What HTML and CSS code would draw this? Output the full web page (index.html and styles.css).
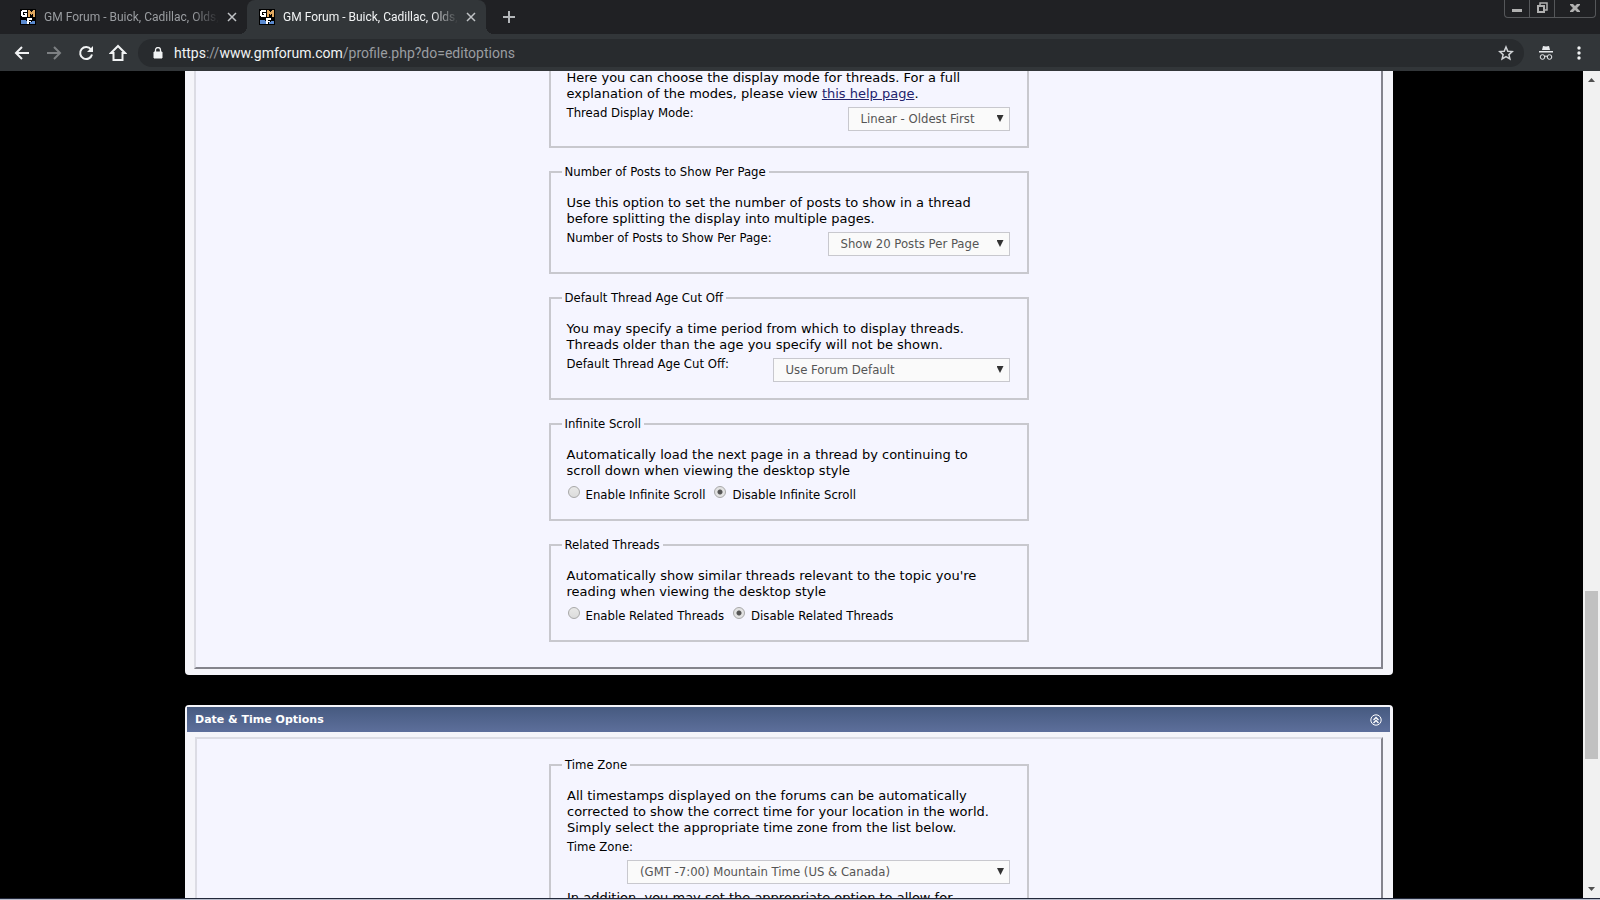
FILE: index.html
```html
<!DOCTYPE html>
<html lang="en">

<head>
  <meta charset="utf-8">
  <title>GM Forum - Buick, Cadillac, Olds</title>
  <link rel="stylesheet" href="styles.css">
</head>

<body>
  <svg width="0" height="0" class="defs" aria-hidden="true">
    <symbol id="favicon" viewBox="0 0 16 16">
      <rect width="16" height="16" fill="#000"/>
      <path d="M1 11h5v1h1v3H1zM10 13h2v-1h3v3h-5z" fill="#5a8ad0"/>
      <path d="M2 1h5v2H3v3h2V5H4V4h3v4H2V7H1V2h1z" fill="#fff"/>
      <path d="M8 1h2v1h1v1h1V2h1V1h2v7h-2V5h-1v1h-1V5h-1v3H8z" fill="#e0a860"/>
      <path d="M7 9h5v2H9v1h2v1H9v2H7z" fill="#fff"/>
    </symbol>
    <symbol id="close" viewBox="0 0 10 10">
      <path d="M1 1l8 8M9 1l-8 8" stroke="currentColor" stroke-width="1.5" fill="none"/>
    </symbol>
  </svg>

  <div class="browser">
    <header class="tabs">
      <div class="tab">
        <svg class="favicon"><use href="#favicon"/></svg>
        <span class="tab-title">GM Forum - Buick, Cadillac, Olds,</span>
        <button class="tab-close" aria-label="Close tab"><svg width="10" height="10"><use href="#close"/></svg></button>
      </div>
      <div class="tab active">
        <svg class="favicon"><use href="#favicon"/></svg>
        <span class="tab-title">GM Forum - Buick, Cadillac, Olds,</span>
        <button class="tab-close" aria-label="Close tab"><svg width="10" height="10"><use href="#close"/></svg></button>
      </div>
      <button class="new-tab" aria-label="New tab"><svg width="12" height="12" viewBox="0 0 12 12"><path d="M6 0v12M0 6h12" stroke="#b4b7ba" stroke-width="2"/></svg></button>
      <div class="window-buttons">
        <button aria-label="Minimize"><svg width="10" height="10" viewBox="0 0 10 10"><path d="M0 6h10v3H0z" fill="#b0b0b0"/></svg></button>
        <button aria-label="Restore"><svg width="12" height="12" viewBox="0 0 12 12"><path d="M4 3V1h7v7H9" stroke="#b0b0b0" stroke-width="1.5" fill="none"/><path d="M2 4h6v6H2z" stroke="#b0b0b0" stroke-width="2" fill="none"/></svg></button>
        <button class="window-close" aria-label="Close"><svg width="10" height="10" viewBox="0 0 10 10"><path d="M0 1h3l2 2 2-2h3v1L7 5l3 3v1H7L5 7 3 9H0V8l3-3-3-3z" fill="#b0b0b0"/></svg></button>
      </div>
    </header>

    <nav class="toolbar">
      <button aria-label="Back"><svg width="16" height="16" viewBox="0 0 16 16"><path d="M15 8H2M8 2L2 8l6 6" stroke="#f1f3f4" stroke-width="2" fill="none"/></svg></button>
      <button aria-label="Forward"><svg width="16" height="16" viewBox="0 0 16 16"><path d="M1 8h13M8 2l6 6-6 6" stroke="#7d8083" stroke-width="2" fill="none"/></svg></button>
      <button aria-label="Reload"><svg width="16" height="16" viewBox="0 0 16 16"><path d="M13 4.500A6 6 0 1 0 14 9.500" stroke="#f1f3f4" stroke-width="2" fill="none"/><path d="M15 1v6H9z" fill="#f1f3f4"/></svg></button>
      <button aria-label="Home"><svg width="18" height="18" viewBox="0 0 18 18"><path d="M9 2L2 9h2.500v7h9V9H16z" stroke="#f1f3f4" stroke-width="2" fill="none"/></svg></button>
      <div class="address">
        <svg width="10" height="12" viewBox="0 0 10 12"><path d="M1 5h8v6H1z" fill="#f1f3f4" stroke="#f1f3f4"/><path d="M2.500 5V3a2.500 2.500 0 0 1 5 0v2" stroke="#f1f3f4" stroke-width="1.300" fill="none"/></svg>
        <div class="url" role="textbox" contenteditable="true" spellcheck="false" aria-label="Address"><b>https</b>://<b>www.gmforum.com</b>/profile.php?do=editoptions</div>
        <button class="star" aria-label="Bookmark"><svg width="16" height="16" viewBox="0 0 16 16"><path d="M8 2l1.800 4.200 4.500.4-3.400 3 1 4.400L8 11.700 4.100 14l1-4.400-3.400-3 4.500-.4z" stroke="#d0d3d6" stroke-width="1.500" fill="none"/></svg></button>
      </div>
      <svg class="incognito" width="16" height="16" viewBox="0 0 16 16"><path d="M4 5l1-4 3 .6L11 1l1 4zM1 6h14v1.500H1z" fill="#e8eaed"/><circle cx="4.500" cy="12" r="2.300" stroke="#e8eaed" fill="none"/><circle cx="11.500" cy="12" r="2.300" stroke="#e8eaed" fill="none"/><path d="M6.500 11.500q1.500-1 3 0" stroke="#e8eaed" fill="none"/></svg>
      <button class="menu" aria-label="Menu"><svg width="4" height="14" viewBox="0 0 4 14"><circle cx="2" cy="2" r="1.700" fill="#f1f3f4"/><circle cx="2" cy="7" r="1.700" fill="#f1f3f4"/><circle cx="2" cy="12" r="1.700" fill="#f1f3f4"/></svg></button>
    </nav>

    <div class="viewport">
      <main class="page">
        <form>
          <section class="panel continued">
            <div class="panel-body">
              <div class="fieldset continued">
                <p>Here you can choose the display mode for threads. For a full<br>explanation of the modes, please view <a href="#">this help page</a>.</p>
                <div class="row">
                  <label for="mode">Thread Display Mode:</label>
                  <span class="select w-mode"><select id="mode"><option>Linear - Oldest First</option></select></span>
                </div>
              </div>

              <fieldset>
                <legend>Number of Posts to Show Per Page</legend>
                <p>Use this option to set the number of posts to show in a thread<br>before splitting the display into multiple pages.</p>
                <div class="row">
                  <label for="posts">Number of Posts to Show Per Page:</label>
                  <span class="select w-posts"><select id="posts"><option>Show 20 Posts Per Page</option></select></span>
                </div>
              </fieldset>

              <fieldset>
                <legend>Default Thread Age Cut Off</legend>
                <p>You may specify a time period from which to display threads.<br>Threads older than the age you specify will not be shown.</p>
                <div class="row">
                  <label for="age">Default Thread Age Cut Off:</label>
                  <span class="select w-age"><select id="age"><option>Use Forum Default</option></select></span>
                </div>
              </fieldset>

              <fieldset>
                <legend>Infinite Scroll</legend>
                <p>Automatically load the next page in a thread by continuing to<br>scroll down when viewing the desktop style</p>
                <div class="radios">
                  <label><input type="radio" name="scroll"> Enable Infinite Scroll</label>
                  <label><input type="radio" name="scroll" checked> Disable Infinite Scroll</label>
                </div>
              </fieldset>

              <fieldset>
                <legend>Related Threads</legend>
                <p>Automatically show similar threads relevant to the topic you're<br>reading when viewing the desktop style</p>
                <div class="radios">
                  <label><input type="radio" name="related"> Enable Related Threads</label>
                  <label><input type="radio" name="related" checked> Disable Related Threads</label>
                </div>
              </fieldset>
            </div>
          </section>

          <section class="panel">
            <h2>Date &amp; Time Options
              <button type="button" aria-label="Collapse"><svg width="12" height="12" viewBox="0 0 12 12"><circle cx="6" cy="6" r="5.200" stroke="#fff" fill="none"/><path d="M3.500 6L6 3.500 8.500 6M3.500 9L6 6.500 8.500 9" stroke="#fff" stroke-width="1.300" fill="none"/></svg></button>
            </h2>
            <div class="panel-body">
              <fieldset>
                <legend>Time Zone</legend>
                <p>All timestamps displayed on the forums can be automatically<br>corrected to show the correct time for your location in the world.<br>Simply select the appropriate time zone from the list below.</p>
                <div class="row stacked">
                  <label for="zone">Time Zone:</label>
                  <span class="select w-zone"><select id="zone"><option>(GMT -7:00) Mountain Time (US &amp; Canada)</option></select></span>
                </div>
                <p>In addition, you may set the appropriate option to allow for</p>
              </fieldset>
            </div>
          </section>
        </form>
      </main>
      <div class="scrollbar">
        <span class="arrow up"></span>
        <span class="thumb"></span>
        <span class="arrow down"></span>
      </div>
    </div>
    <footer class="taskbar"></footer>
  </div>
</body>

</html>
```
FILE: styles.css
```css
* {
  box-sizing: border-box;
}

body {
  margin: 0;
  background: #000;
  overflow: hidden;
  font-family: "DejaVu Sans Condensed", Tahoma, sans-serif;
  font-size: 13px;
}

button {
  display: flex;
  align-items: center;
  justify-content: center;
  padding: 0;
  border: 0;
  background: none;
}

.defs {
  position: absolute;
}

.browser {
  display: flex;
  flex-direction: column;
  height: 100vh;
}

/* tab strip */
.tabs {
  display: flex;
  height: 34px;
  padding-left: 8px;
  background: #202124;
}

.tab {
  position: relative;
  display: flex;
  align-items: center;
  width: 239px;
  padding: 0 10px 0 12px;
  color: #9a9da1;
  font-family: Roboto, sans-serif;
  font-size: 12px;
}

.tab.active {
  border-radius: 8px 8px 0 0;
  background: #323639;
  color: #f1f3f4;
}

/* curved feet of the open tab */
.tab.active::before,
.tab.active::after {
  content: "";
  position: absolute;
  bottom: 0;
  left: -8px;
  width: 8px;
  height: 8px;
  background: radial-gradient(circle at 0 0, transparent 8px, #323639 8px);
}

.tab.active::after {
  right: -8px;
  left: auto;
  background: radial-gradient(circle at 100% 0, transparent 8px, #323639 8px);
}

.favicon {
  flex-shrink: 0;
  width: 16px;
  height: 16px;
  margin-right: 8px;
}

.tab-title {
  flex: 1;
  min-width: 0;
  white-space: nowrap;
  -webkit-mask-image: linear-gradient(to right, #000 85%, transparent);
  mask-image: linear-gradient(to right, #000 85%, transparent);
}

.tab-close {
  margin-left: 8px;
  color: #c0c3c6;
}

.new-tab {
  width: 46px;
}

.window-buttons {
  display: flex;
  height: 18px;
  margin-left: auto;
  margin-right: 4px;
  border: 1px solid #55575a;
  border-top: 0;
  border-radius: 0 0 4px 4px;
}

.window-buttons button {
  width: 25px;
  padding-bottom: 2px;
  border-right: 1px solid #55575a;
}

.window-buttons .window-close {
  width: 40px;
  border-right: 0;
}

/* toolbar */
.toolbar {
  display: flex;
  align-items: center;
  height: 37px;
  padding: 0 13px 0 6px;
  background: #323639;
}

.toolbar > button {
  width: 32px;
  height: 32px;
}

.toolbar .menu {
  width: 16px;
}

.address {
  display: flex;
  flex: 1;
  align-items: center;
  height: 28px;
  margin-left: 4px;
  padding: 0 10px 0 15px;
  border-radius: 14px;
  background: #282b2e;
}

.url {
  flex: 1;
  padding-left: 11px;
  color: #9a9da1;
  font-family: Roboto, sans-serif;
  font-size: 14px;
}

.url b {
  color: #f1f3f4;
  font-weight: normal;
}

.incognito {
  margin: 0 17px 0 14px;
}

/* forum page */
.viewport {
  display: flex;
  flex: 1;
  min-height: 0;
  overflow: hidden;
}

.page {
  flex: 1;
  padding: 0 190px 0 185px;
}

.panel {
  margin-bottom: 30px;
  padding-bottom: 6px;
  border: 2px solid #f5f5fa;
  border-right-width: 3px;
  border-radius: 4px;
  background: #f5f5fa;
}

.panel.continued {
  padding-bottom: 4px;
  border-top: 0;
  border-radius: 0 0 4px 4px;
}

.panel h2 {
  display: flex;
  align-items: center;
  justify-content: space-between;
  height: 25px;
  margin: 0;
  padding: 0 8px;
  background: linear-gradient(#465a80, #5d6f9b);
  color: #fff;
  font-family: "DejaVu Sans", Verdana, sans-serif;
  font-size: 11px;
}

.panel-body {
  margin: 5px 7px 0 8px;
  padding: 18px 0 25px;
  border: 2px solid #dcdce4;
  border-right-color: #84848c;
  border-bottom-color: #84848c;
  background: #f5f5ff;
}

.continued .panel-body {
  margin: 0 7px;
  padding-top: 0;
  border-top: 0;
}

fieldset,
.fieldset {
  width: 480px;
  margin: 0 auto 16px;
  padding: 15px 17px 16px 16px;
  border: 2px solid #c8c8ce;
}

fieldset:last-child {
  margin-bottom: 0;
}

/* top edge is scrolled out of view */
.fieldset.continued {
  margin-top: -1px;
  padding-top: 0;
  padding-bottom: 15px;
  border-top: 0;
}

legend {
  margin-left: -5px;
  padding: 0 3px;
  line-height: 16px;
}

p {
  margin: 0;
  font-family: "DejaVu Sans", Verdana, sans-serif;
  font-size: 13px;
  line-height: 16px;
  white-space: nowrap;
}

p a {
  color: #22226c;
}

.row {
  display: flex;
  justify-content: space-between;
  padding-top: 3px;
  line-height: 16px;
}

.row.stacked {
  flex-wrap: wrap;
  padding-bottom: 6px;
}

.stacked label {
  width: 100%;
  margin-bottom: 3px;
}

.stacked .select {
  margin-left: auto;
}

.select {
  position: relative;
  display: block;
  margin-top: 2px;
}

.select::after {
  content: "";
  position: absolute;
  top: 8px;
  right: 6px;
  width: 7px;
  height: 7px;
  background: #333;
  clip-path: polygon(0 0, 100% 0, 50% 100%);
  pointer-events: none;
}

select {
  appearance: none;
  display: block;
  width: 100%;
  height: 24px;
  padding: 0 12px;
  border: 1px solid #c8c8ce;
  border-radius: 0;
  background: #fafafa;
  color: #555;
  font: inherit;
}

.w-mode {
  width: 162px;
}

.w-posts {
  width: 182px;
}

.w-age {
  width: 237px;
}

.w-zone {
  width: 383px;
}

.radios {
  display: flex;
  gap: 8px;
  padding-top: 7px;
  line-height: 17px;
}

.radios label {
  display: flex;
  gap: 6px;
}

input[type="radio"] {
  appearance: none;
  width: 12px;
  height: 12px;
  margin: 0 0 0 1px;
  border: 1px solid #a8a8a8;
  border-radius: 50%;
  background: linear-gradient(#e8e8e8, #dcdcdc);
}

input[type="radio"]:checked {
  background: radial-gradient(circle, #555 2px, #e2e2e2 3px);
}

/* scrollbar */
.scrollbar {
  display: flex;
  flex-direction: column;
  align-items: center;
  width: 17px;
  background: #f1f1f1;
}

.arrow {
  width: 7px;
  height: 4px;
  background: #505050;
}

.up {
  margin-top: 7px;
  clip-path: polygon(50% 0, 100% 100%, 0 100%);
}

.down {
  margin-top: auto;
  margin-bottom: 7px;
  clip-path: polygon(0 0, 100% 0, 50% 100%);
}

.thumb {
  width: 13px;
  height: 168px;
  margin-top: 509px;
  background: #c1c1c1;
}

.taskbar {
  height: 2px;
  border-top: 1px solid #22283a;
  background: #b8bccb;
}
```
